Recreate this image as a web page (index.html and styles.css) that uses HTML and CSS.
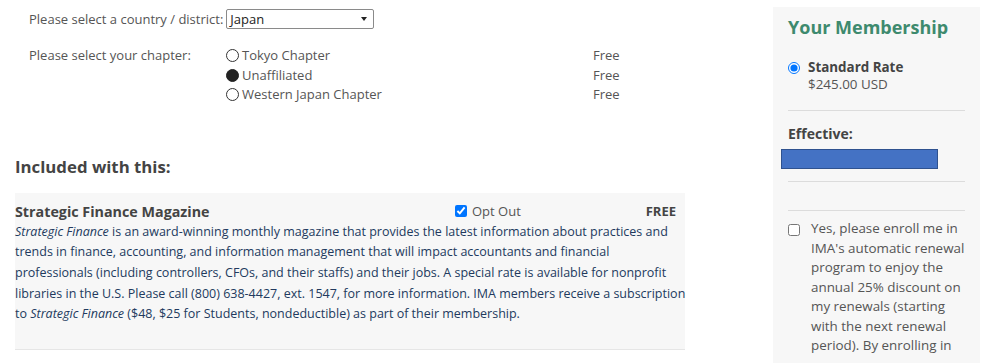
FILE: index.html
```html
<!DOCTYPE html>
<html>
<head>
<meta charset="utf-8">
<link rel="stylesheet" href="styles.css">
</head>
<body>
<div class="page">
  <main class="main">
    <div class="form">
      <div class="row country">
        <span class="label-inline">Please select a country / district:</span>
        <div class="select"><span>Japan</span><span class="caret"></span></div>
      </div>
      <div class="chapters">
        <div class="label">Please select your chapter:</div>
        <div class="opts">
          <div class="opt"><span class="rad"></span>Tokyo Chapter</div>
          <div class="opt"><span class="rad on"></span>Unaffiliated</div>
          <div class="opt"><span class="rad"></span>Western Japan Chapter</div>
        </div>
        <div class="prices">
          <div>Free</div>
          <div>Free</div>
          <div>Free</div>
        </div>
      </div>
    </div>
    <h2 class="included">Included with this:</h2>
    <section class="item">
      <div class="item-head">
        <span class="item-title">Strategic Finance Magazine</span>
        <label class="optout"><input type="checkbox" checked>Opt Out</label>
        <span class="item-price">FREE</span>
      </div>
      <p class="desc"><em>Strategic Finance</em> is an award-winning monthly magazine that provides the latest information about practices and trends in finance, accounting, and information management that will impact accountants and financial professionals (including controllers, CFOs, and their staffs) and their jobs. A special rate is available for nonprofit libraries in the U.S. Please call (800) 638-4427, ext. 1547, for more information. IMA members receive a subscription to <em>Strategic Finance</em> ($48, $25 for Students, nondeductible) as part of their membership.</p>
    </section>
  </main>
  <aside class="side">
    <h3 class="side-title">Your Membership</h3>
    <label class="rate"><input type="radio" checked><span><b>Standard Rate</b><br>$245.00 USD</span></label>
    <hr class="sep">
    <div class="eff">Effective:</div>
    <div class="effbar"></div>
    <hr class="sep">
    <hr class="sep second">
    <label class="renew"><input type="checkbox"><span>Yes, please enroll me in IMA's automatic renewal program to enjoy the annual 25% discount on my renewals (starting with the next renewal period). By enrolling in</span></label>
  </aside>
</div>
</body>
</html>
```

FILE: styles.css
```css
* { box-sizing: border-box; }
html, body { margin: 0; padding: 0; background: #fff; }
body { font-family: "Open Sans", "Liberation Sans", sans-serif; font-size: 13px; color: #555; overflow: hidden; }
.page { display: flex; align-items: flex-start; height: 363px; }
.main { width: 670px; margin-left: 15px; flex: none; }
.form { padding-left: 14px; padding-top: 9px; }
.row.country { display: flex; align-items: center; height: 20px; }
.label-inline { margin-right: 3px; }
.select { width: 148px; height: 20px; border: 1px solid #8a8a8a; border-radius: 2px; display: flex; align-items: center; justify-content: space-between; padding: 0 6px 0 3px; color: #222; background: #fff; }
.caret { width: 0; height: 0; border-left: 3.5px solid transparent; border-right: 3.5px solid transparent; border-top: 4px solid #222; }
.chapters { display: flex; margin-top: 17px; line-height: 19.5px; }
.label { width: 197px; flex: none; }
.opts { width: 367px; flex: none; }
.opt { display: flex; align-items: center; }
.rad { width: 13px; height: 13px; border: 1px solid #333; border-radius: 50%; margin-right: 3px; }
.rad.on { background: #222; border-color: #222; }
.included { font-size: 16.8px; font-weight: 700; color: #444; margin: 50px 0 0; line-height: 24px; }
.item { background: #f7f7f7; margin-top: 14px; padding-top: 8px; border-bottom: 1px solid #e6e6e6; height: 157px; }
.item-head { display: flex; align-items: center; height: 21px; padding-right: 9px; }
.item-title { font-size: 14.3px; font-weight: 700; color: #444; width: 440px; }
.optout { display: flex; align-items: center; color: #555; }
.optout input { width: 12px; height: 12px; margin: 0 5px 0 0; accent-color: #0075ff; }
.item-price { margin-left: auto; font-weight: 700; color: #444; }
.desc { margin: 0 -2px 0 0; color: #223a5e; font-size: 12.5px; line-height: 20.7px; }
.side { width: 207px; margin-left: 88px; margin-top: 7px; background: #f7f7f7; height: 356px; padding: 8px 15px 0 15px; flex: none; }
.side-title { font-size: 18px; font-weight: 700; color: #3e8a6e; margin: 0; line-height: 24px; }
.rate { display: flex; align-items: flex-start; margin-top: 20px; line-height: 17px; color: #555; font-size: 13.4px; }
.rate b { color: #444; }
.rate input { margin: 3px 8px 0 0; width: 12px; height: 12px; accent-color: #0075ff; }
.sep { border: 0; border-top: 1px solid #dcdcdc; margin: 0; }
.rate + .sep { margin-top: 17px; }
.eff { font-weight: 700; font-size: 14px; color: #444; margin-top: 13px; line-height: 20px; }
.effbar { width: 157px; height: 20px; background: #4472c4; border: 1px solid #2f528f; margin: 5px 0 0 -7px; }
.effbar + .sep { margin-top: 12px; }
.sep.second { margin-top: 28px; }
.renew { display: flex; align-items: flex-start; margin-top: 8px; font-size: 13.4px; line-height: 19.5px; color: #555; }
.renew input { margin: 5px 11px 0 0; width: 12px; height: 12px; flex: none; }
```
